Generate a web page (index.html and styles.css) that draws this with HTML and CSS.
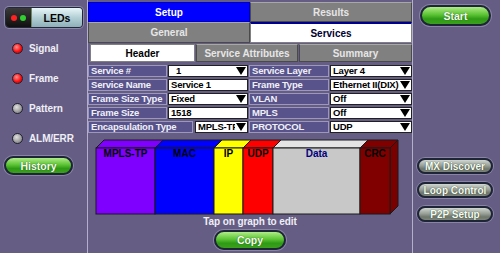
FILE: index.html
```html
<!DOCTYPE html>
<html lang="en">
<head>
    <meta charset="UTF-8">
    <title>Services Setup</title>
    <link rel="stylesheet" href="styles.css">
</head>
<body>
    <div class="screen">
        <aside class="side-left">
            <div class="leds-btn">
                <span class="leds-lamps"><i class="lamp red"></i><i class="lamp green"></i></span>
                <span class="leds-label">LEDs</span>
            </div>
            <ul class="led-list">
                <li><span class="led on"></span>Signal</li>
                <li><span class="led on"></span>Frame</li>
                <li><span class="led"></span>Pattern</li>
                <li><span class="led"></span>ALM/ERR</li>
            </ul>
            <button class="pill green history">History</button>
        </aside>

        <main class="main">
            <div class="tabs">
                <div class="tab blue">Setup</div>
                <div class="tab">Results</div>
            </div>
            <div class="tabs sub">
                <div class="tab">General</div>
                <div class="tab selected services">Services</div>
            </div>
            <div class="tabs inner">
                <div class="tab selected w-header">Header</div>
                <div class="tab w-attr">Service Attributes</div>
                <div class="tab w-summary">Summary</div>
            </div>

            <div class="form">
                <div class="row">
                    <div class="label">Service #</div>
                    <div class="value select indent">1<span class="arrow"></span></div>
                    <div class="label r">Service Layer</div>
                    <div class="value select r">Layer 4<span class="arrow"></span></div>
                </div>
                <div class="row">
                    <div class="label">Service Name</div>
                    <div class="value">Service 1</div>
                    <div class="label r">Frame Type</div>
                    <div class="value select r">Ethernet II(DIX)<span class="arrow"></span></div>
                </div>
                <div class="row">
                    <div class="label">Frame Size Type</div>
                    <div class="value select">Fixed<span class="arrow"></span></div>
                    <div class="label r">VLAN</div>
                    <div class="value select r">Off<span class="arrow"></span></div>
                </div>
                <div class="row">
                    <div class="label">Frame Size</div>
                    <div class="value">1518</div>
                    <div class="label r">MPLS</div>
                    <div class="value select r">Off<span class="arrow"></span></div>
                </div>
                <div class="row">
                    <div class="label wide">Encapsulation Type</div>
                    <div class="value select narrow">MPLS-TP<span class="arrow"></span></div>
                    <div class="label r">PROTOCOL</div>
                    <div class="value select r">UDP<span class="arrow"></span></div>
                </div>
            </div>

            <svg class="graph" width="324" height="78" viewBox="88 138 324 78">
                <g stroke="#1a1a1a" stroke-width="1">
                    <polygon points="96,148 104,140 163,140 155,148" fill="#8000ff"/>
                    <polygon points="155,148 163,140 222,140 214,148" fill="#0000ff"/>
                    <polygon points="214,148 222,140 251,140 243,148" fill="#ffff00"/>
                    <polygon points="243,148 251,140 281,140 273,148" fill="#ff0000"/>
                    <polygon points="273,148 281,140 368,140 360,148" fill="#e4e4e4"/>
                    <polygon points="360,148 368,140 398,140 390,148" fill="#800000"/>
                    <polygon points="390,148 398,140 398,206 390,214" fill="#7a0000"/>
                    <rect x="96" y="148" width="59" height="66" fill="#8000ff"/>
                    <rect x="155" y="148" width="59" height="66" fill="#0000ff"/>
                    <rect x="214" y="148" width="29" height="66" fill="#ffff00"/>
                    <rect x="243" y="148" width="30" height="66" fill="#ff0000"/>
                    <rect x="273" y="148" width="87" height="66" fill="#c8c8c8"/>
                    <rect x="360" y="148" width="30" height="66" fill="#800000"/>
                </g>
                <g class="graph-text" text-anchor="middle">
                    <text x="125.5" y="157">MPLS-TP</text>
                    <text x="184.5" y="157">MAC</text>
                    <text x="228.5" y="157">IP</text>
                    <text x="258" y="157">UDP</text>
                    <text x="316.5" y="157" fill="#000080">Data</text>
                    <text x="375" y="157">CRC</text>
                </g>
            </svg>
            <p class="hint">Tap on graph to edit</p>
            <button class="pill green copy">Copy</button>
        </main>

        <aside class="side-right">
            <button class="pill green start">Start</button>
            <div class="tools">
                <button class="pill gray">MX Discover</button>
                <button class="pill gray">Loop Control</button>
                <button class="pill gray">P2P Setup</button>
            </div>
        </aside>
    </div>
</body>
</html>
```

FILE: styles.css
```css
body {
    margin: 0;
    background: #655d83;
    font-family: "Liberation Sans", Arial, sans-serif;
    font-weight: bold;
    font-size: 10px;
    color: #eeeef6;
}
.screen {
    display: flex;
    width: 500px;
    height: 253px;
    overflow: hidden;
}

/* left column */
.side-left {
    width: 87px;
    border-right: 1px solid #b4b0cc;
    display: flex;
    flex-direction: column;
}
.leds-btn {
    display: flex;
    width: 76px;
    height: 19px;
    margin: 7px 0 0 5px;
    border: 1px solid #22283a;
    border-radius: 4px;
    overflow: hidden;
    box-shadow: 0 0 0 1px #8a86a6;
}
.leds-lamps {
    width: 25px;
    background: linear-gradient(#3a3a3a, #101010);
    display: flex;
    align-items: center;
    justify-content: center;
    gap: 3px;
}
.lamp {
    width: 6px;
    height: 6px;
    border-radius: 50%;
}
.lamp.red { background: #ff2020; }
.lamp.green { background: #30d030; }
.leds-label {
    flex: 1;
    background: linear-gradient(#e8f6f8, #b4d0d6 50%, #8eb0b8);
    color: #000;
    font-size: 10.5px;
    display: flex;
    align-items: center;
    justify-content: center;
    border-left: 1px solid #6a8a60;
}
.led-list {
    list-style: none;
    margin: 5px 0 0;
    padding: 0;
}
.led-list li {
    height: 30px;
    display: flex;
    align-items: center;
    padding-left: 12px;
    gap: 6px;
    font-size: 10px;
    letter-spacing: -0.1px;
}
.led {
    width: 9px;
    height: 9px;
    border-radius: 50%;
    border: 1px solid #202030;
    background: radial-gradient(circle at 40% 35%, #e0e0e0, #9a9a9a 60%, #707070);
}
.led.on {
    background: radial-gradient(circle at 40% 35%, #ff9090, #ff1010 55%, #b00000);
}

/* pill buttons */
.pill {
    font-family: inherit;
    font-weight: bold;
    font-size: 10.5px;
    color: #f4fff0;
    border: 2px solid #1d2536;
    border-radius: 11px;
    padding: 0;
    box-shadow: 0 0 0 1px #8984a6;
    text-shadow: 0 0 1px #204010;
}
.pill.green {
    background: linear-gradient(#b0ec88, #5cc434 45%, #2f9a16 70%, #3aa01c);
}
.pill.gray {
    background: linear-gradient(#d0d6d0, #9aa29a 45%, #6e766c 75%, #7e867c);
    text-shadow: 0 0 1px #202020;
    border-radius: 9px;
}
.history {
    width: 69px;
    height: 19px;
    margin: 3px 0 0 4px;
}

/* main panel */
.main {
    width: 324px;
    border-right: 1px solid #b4b0cc;
    display: flex;
    flex-direction: column;
    padding-top: 2px;
}
.tabs {
    display: flex;
    height: 20px;
}
.tabs.sub {
    height: 21px;
}
.tabs.inner {
    height: 18px;
    margin-top: 1px;
    padding-left: 2px;
    gap: 1px;
}
.tab {
    flex: 1;
    box-sizing: border-box;
    display: flex;
    align-items: center;
    justify-content: center;
    background: #808080;
    border: 1px solid #4a4a4a;
    border-top-color: #a8a8a8;
    color: #e6e6e6;
}
.tab.blue {
    background: #0000ff;
    border-color: #0000c0;
    color: #fff;
}
.tab.selected {
    background: #fff;
    color: #000;
    border-color: #808080;
}
.tab.services {
    border-top: 2px solid #000090;
    color: #000030;
}
.tab.w-header { flex: 0 0 105px; }
.tab.w-attr { flex: 0 0 102px; }
.tab.w-summary { flex: 1; }

.form {
    margin-top: 3px;
    display: flex;
    flex-direction: column;
    gap: 2px;
    font-size: 9.5px;
    letter-spacing: -0.2px;
}
.row {
    display: flex;
    height: 12px;
}
.label {
    box-sizing: border-box;
    width: 79px;
    background: #58538a;
    border: 1px solid #9c98bc;
    padding-left: 2px;
    line-height: 10px;
    color: #f0f0f8;
    white-space: nowrap;
    overflow: hidden;
}
.label.r {
    width: 80px;
    margin-left: 1px;
}
.label.wide {
    width: 105px;
}
.value {
    box-sizing: border-box;
    position: relative;
    width: 80px;
    margin-left: 1px;
    background: #fff;
    border: 1px solid #202020;
    padding-left: 2px;
    line-height: 10px;
    color: #000;
    white-space: nowrap;
    overflow: hidden;
}
.value.r {
    width: 82px;
}
.value.narrow {
    width: 53px;
    margin-left: 2px;
}
.value.indent {
    padding-left: 7px;
}
.arrow {
    position: absolute;
    right: 0;
    top: 0;
    width: 12px;
    height: 10px;
    background: #fff;
}
.arrow::after {
    content: "";
    position: absolute;
    right: 1px;
    top: 1px;
    border-left: 5px solid transparent;
    border-right: 5px solid transparent;
    border-top: 8px solid #000;
}

.graph {
    display: block;
    margin-top: 5px;
}
.graph-text {
    font-family: "Liberation Sans", Arial, sans-serif;
    font-weight: bold;
    font-size: 10px;
    fill: #000;
}
.hint {
    margin: 0;
    height: 12px;
    line-height: 12px;
    text-align: center;
    font-size: 10px;
    letter-spacing: -0.1px;
}
.copy {
    width: 72px;
    height: 20px;
    margin: 2px auto 0;
}

/* right column */
.side-right {
    flex: 1;
    display: flex;
    flex-direction: column;
    align-items: flex-start;
}
.start {
    width: 71px;
    height: 21px;
    margin: 5px 0 0 7px;
}
.tools {
    margin: 132px 0 0 4px;
    display: flex;
    flex-direction: column;
    gap: 8px;
}
.tools .pill {
    width: 76px;
    height: 16px;
    font-size: 10px;
}
```
